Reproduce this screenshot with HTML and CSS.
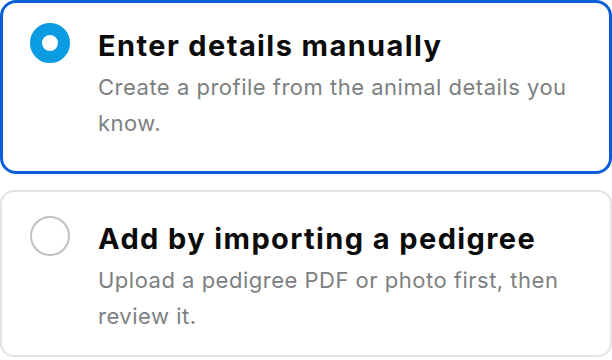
FILE: index.html
```html
<!DOCTYPE html>
<html>
<head>
<meta charset="utf-8">
<link rel="stylesheet" href="styles.css">
</head>
<body>
<div class="list">
  <div class="option selected">
    <span class="radio on"></span>
    <div class="text">
      <div class="title">Enter details manually</div>
      <div class="desc">Create a profile from the animal details you know.</div>
    </div>
  </div>
  <div class="option">
    <span class="radio"></span>
    <div class="text">
      <div class="title">Add by importing a pedigree</div>
      <div class="desc">Upload a pedigree PDF or photo first, then review it.</div>
    </div>
  </div>
</div>
</body>
</html>
```
FILE: styles.css
```css
html, body { margin: 0; padding: 0; background: #fff; }
body { width: 612px; height: 360px; overflow: hidden; font-family: Inter, "Noto Sans", sans-serif; }
.list { display: flex; flex-direction: column; gap: 16px; }
.option {
  display: flex;
  align-items: flex-start;
  gap: 28px;
  box-sizing: border-box;
  border: 2px solid #e2e4e4;
  border-radius: 14px;
  padding: 24px 28px 0 28px;
  height: 167px;
}
.option.selected {
  border: 3px solid #0b5ed8;
  border-radius: 16px;
  height: 174px;
  padding: 20px 28px 0 27px;
}
.radio {
  flex: none;
  width: 40px; height: 40px;
  box-sizing: border-box;
  border-radius: 50%;
  border: 2px solid #bfc2c4;
}
.radio.on { border: 12px solid #0a9be2; }
.text { display: flex; flex-direction: column; padding-top: 5px; min-width: 0; }
.title {
  font-size: 29px;
  font-weight: 700;
  color: #0b0b0b;
  line-height: 36px;
  letter-spacing: 1.4px;
  white-space: nowrap;
}
.desc {
  font-size: 22px;
  color: #7d8081;
  line-height: 36px;
  letter-spacing: 0.5px;
  margin-top: 5px;
}
```
